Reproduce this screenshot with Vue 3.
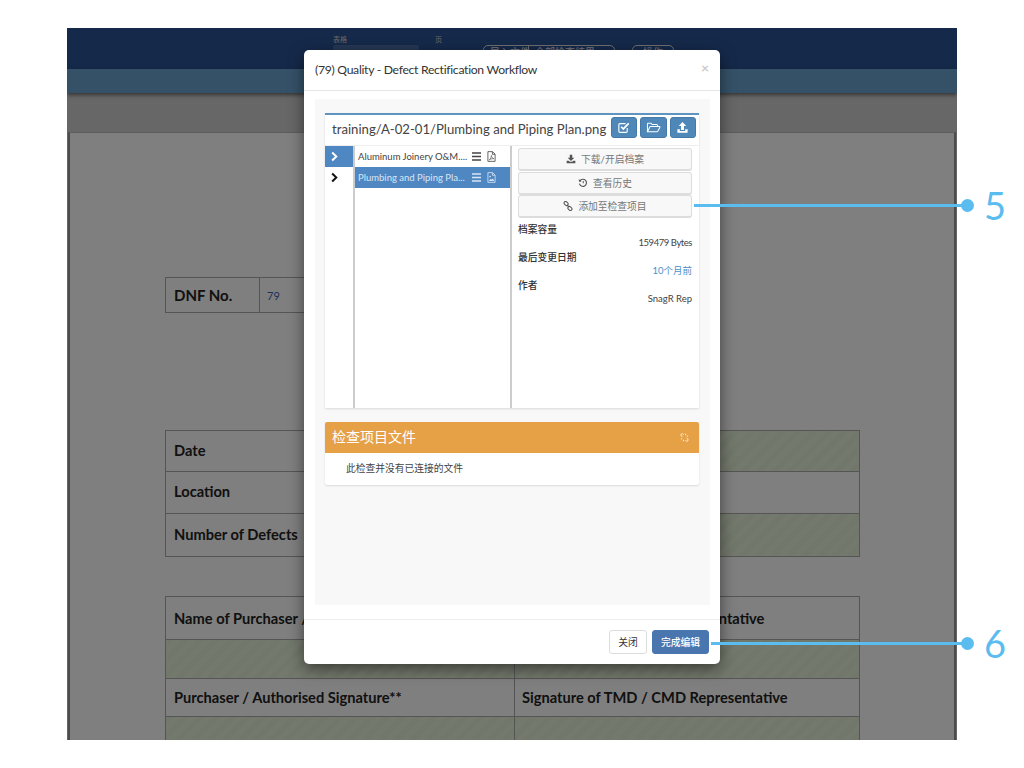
<script setup>
const files = [
  { name: 'Aluminum Joinery O&M....', active: false, kind: 'pdf' },
  { name: 'Plumbing and Piping Pla...', active: true, kind: 'img' },
]
const actions = [
  { label: '下载/开启档案', icon: 'download' },
  { label: '查看历史', icon: 'history' },
  { label: '添加至检查项目', icon: 'link' },
]
</script>

<template>
  <div class="root">
    <div class="screen">
      <div class="topbar">
        <div class="field field-a"><span>表格</span><i class="fake-input"></i></div>
        <div class="field field-b"><span>页</span></div>
        <div class="outline o1">
          <span class="seg seg-a">导入文件</span>
          <span class="seg">全部检查结果</span>
        </div>
        <div class="outline o2"><span class="seg">操作</span></div>
      </div>
      <div class="subbar"></div>
      <div class="band"></div>
      <div class="paper">
        <div class="tbl tbl-dnf">
          <div class="cell head dnf-l">DNF No.</div>
          <div class="cell dnf-v">79</div>
        </div>
        <div class="tbl tbl-info">
          <div class="row r41"><div class="cell head">Date</div><div class="cell hatch"></div></div>
          <div class="row r42"><div class="cell head">Location</div><div class="cell"></div></div>
          <div class="row r43"><div class="cell head">Number of Defects</div><div class="cell hatch"></div></div>
        </div>
        <div class="tbl tbl-sign">
          <div class="row r43"><div class="cell head">Name of Purchaser / Authorised</div><div class="cell head">Name of TMD / CMD Representative</div></div>
          <div class="row r40"><div class="cell hatch"></div><div class="cell hatch"></div></div>
          <div class="row r39"><div class="cell head">Purchaser / Authorised Signature**</div><div class="cell head">Signature of TMD / CMD Representative</div></div>
          <div class="row r39"><div class="cell hatch"></div><div class="cell hatch"></div></div>
        </div>
      </div>
      <div class="dim"></div>
    </div>

    <div class="modal">
      <div class="modal-head">
        <span class="title">(79) Quality - Defect Rectification Workflow</span>
        <span class="close">×</span>
      </div>
      <div class="well">
        <div class="panel">
          <div class="path-row">
            <span class="path">training/A-02-01/Plumbing and Piping Plan.png</span>
            <div class="tool-group">
              <button class="tool">
                <svg viewBox="0 0 14 14" class="ti"><path d="M11 7.500V11a1.200 1.200 0 0 1-1.200 1.200H3.200A1.200 1.200 0 0 1 2 11V4a1.200 1.200 0 0 1 1.200-1.200h6" fill="none" stroke="currentColor" stroke-width="1.200"/><path d="M4.500 6.200 6.800 8.600 12.600 2.600" fill="none" stroke="currentColor" stroke-width="1.900"/></svg>
              </button>
              <button class="tool">
                <svg viewBox="0 0 16 14" class="ti ti-w"><path d="M1.500 11.500V3.200a.8.8 0 0 1 .8-.8h3l1.200 1.400h5a.8.8 0 0 1 .8.8V6M1.500 11.500 4 6.400a.8.8 0 0 1 .7-.4h9.600a.6.6 0 0 1 .5.9l-2.200 4.200a.8.8 0 0 1-.7.4z" fill="none" stroke="currentColor" stroke-width="1.100"/></svg>
              </button>
              <button class="tool">
                <svg viewBox="0 0 14 14" class="ti"><path d="M7 1 11 5.400H8.600V9.600H5.400V5.400H3zM1.500 9h2.600v1.800h5.800V9h2.600v3.600H1.500z" fill="currentColor"/></svg>
              </button>
            </div>
          </div>
          <div class="browser">
            <div class="tree">
              <div class="tree-row on">
                <svg viewBox="0 0 10 12" class="chev"><path d="M2.400 1.600 7 6l-4.600 4.400" fill="none" stroke="currentColor" stroke-width="2.200"/></svg>
              </div>
              <div class="tree-row">
                <svg viewBox="0 0 10 12" class="chev"><path d="M2.400 1.600 7 6l-4.600 4.400" fill="none" stroke="currentColor" stroke-width="2.200"/></svg>
              </div>
            </div>
            <div class="list">
              <div v-for="f in files" :key="f.name" class="file" :class="{ on: f.active }">
                <span class="fname">{{ f.name }}</span>
                <svg viewBox="0 0 10 10" class="bars"><path d="M0 1.200h10M0 5h10M0 8.800h10" stroke="currentColor" stroke-width="1.700"/></svg>
                <svg v-if="f.kind === 'pdf'" viewBox="0 0 10 12" class="fi"><path d="M1 .6h5.200L9 3.400v8H1zM6 .8v2.800h2.800" fill="none" stroke="currentColor" stroke-width=".9"/><path d="M2.600 9.800C4 8.400 5 6.400 4.800 4.800 5.200 7 6 8 7.600 8.400 6 8.200 4 8.800 2.600 9.800z" fill="none" stroke="currentColor" stroke-width=".7"/></svg>
                <svg v-else viewBox="0 0 10 12" class="fi"><path d="M1 .6h5.200L9 3.400v8H1zM6 .8v2.800h2.800" fill="none" stroke="currentColor" stroke-width=".9"/><circle cx="3.400" cy="5" r=".9" fill="currentColor"/><path d="M2 9.800 4.200 7.400 5.400 8.600 6.600 7l1.400 2.800z" fill="currentColor"/></svg>
              </div>
            </div>
            <div class="detail">
              <div class="actions">
                <button v-for="a in actions" :key="a.label" class="act">
                  <svg v-if="a.icon === 'download'" viewBox="0 0 12 12" class="ai"><path d="M4.500 1h3v3.600H10L6 8.400 2 4.600h2.500zM.8 8h2.400l1.400 1.400h2.800L8.800 8h2.400v3H.8z" fill="currentColor"/></svg>
                  <svg v-else-if="a.icon === 'history'" viewBox="0 0 12 12" class="ai"><path d="M2.300 3.400A4.300 4.300 0 1 1 1.700 6.800" fill="none" stroke="currentColor" stroke-width="1.300"/><path d="M.9 1.300 1.200 4.500 4.300 4.200zM5.700 3.600h1.200v2.800H5.700z" fill="currentColor"/></svg>
                  <svg v-else viewBox="0 0 12 12" class="ai"><g fill="none" stroke="currentColor" stroke-width="1.200"><rect x="1" y="1.200" width="5.400" height="3.600" rx="1.800" transform="rotate(45 3.700 3)"/><rect x="5.600" y="7.200" width="5.400" height="3.600" rx="1.800" transform="rotate(45 8.300 9)"/></g><path d="M4.800 4.800 7.200 7.200" stroke="currentColor" stroke-width="1.300"/></svg>
                  <span>{{ a.label }}</span>
                </button>
              </div>
              <dl class="meta">
                <dt>档案容量</dt><dd class="bytes">159479 Bytes</dd>
                <dt>最后变更日期</dt><dd class="link">10个月前</dd>
                <dt>作者</dt><dd>SnagR Rep</dd>
              </dl>
            </div>
          </div>
        </div>

        <div class="panel2">
          <div class="panel2-head">
            <span>检查项目文件</span>
            <svg viewBox="0 0 12 12" class="unlink"><path d="M5 2.200 4.200 1.500a1.700 1.700 0 0 0-2.500 2.400l1.500 1.500M7 9.800l.8.700a1.700 1.700 0 0 0 2.500-2.400L8.800 6.600M7.500 1v2M10.800 4.200H9M1.200 7.800H3M4.500 11V9" fill="none" stroke="currentColor" stroke-width="1.100"/></svg>
          </div>
          <div class="panel2-body">此检查并没有已连接的文件</div>
        </div>
      </div>
      <div class="modal-foot">
        <button class="btn btn-plain">关闭</button>
        <button class="btn btn-main">完成编辑</button>
      </div>
    </div>

    <div class="callout c5"><i class="line"></i><i class="dot"></i><span class="num">5</span></div>
    <div class="callout c6"><i class="line"></i><i class="dot"></i><span class="num">6</span></div>
  </div>
</template>

<style>
html, body { margin: 0; background: #fff; }
</style>

<style scoped>
.root {
  position: relative;
  width: 1024px;
  height: 768px;
  overflow: hidden;
  background: #fff;
  font-family: Lato, "Noto Sans CJK SC", sans-serif;
}
.screen {
  position: absolute;
  left: 67px;
  top: 28px;
  width: 890px;
  height: 712px;
  overflow: hidden;
  background: #ccc;
}
.dim {
  position: absolute;
  inset: 0;
  background: rgba(0, 0, 0, .5);
}
.topbar {
  position: relative;
  height: 41px;
  background: #2a5394;
  color: #ccc;
  font-size: 7px;
}
.field { position: absolute; top: 7px; }
.field span { display: block; line-height: 9px; }
.field-a { left: 266px; }
.field-b { left: 368px; }
.fake-input {
  display: block;
  width: 86px;
  height: 20px;
  margin-top: 1px;
  background: #4a6fa8;
  border-radius: 2px;
}
.outline {
  position: absolute;
  top: 17px;
  height: 20px;
  display: flex;
  border: 1px solid #ddd;
  border-radius: 5px;
  color: #eee;
  font-size: 10px;
  line-height: 11px;
}
.o1 { left: 416px; width: 130px; }
.o2 { left: 565px; width: 40px; justify-content: center; }
.seg { padding: 1px 0 0 6px; white-space: nowrap; }
.o2 .seg { padding-left: 0; }
.seg-a { width: 38px; border-right: 1px solid #ddd; }
.subbar {
  height: 24px;
  background: #6ba2d0;
  box-shadow: 0 2px 4px rgba(0, 0, 0, .5);
  position: relative;
}
.band { height: 39px; background: #cfcfcf; }
.paper {
  box-sizing: border-box;
  height: 620px;
  margin: 0 1px 0 1px;
  padding: 144px 0 0 95px;
  background: #fff;
  border-left: 2px solid #999;
  border-right: 2px solid #999;
  border-top: 1px solid #bbb;
  font-family: Lato, sans-serif;
}
.tbl { color: #222; }
.cell {
  box-sizing: border-box;
  display: flex;
  align-items: center;
  padding-left: 8px;
  border: 1px solid #aaa;
  font-size: 14.650px;
  min-width: 0;
  white-space: nowrap;
  overflow: hidden;
}
.head { font-weight: 700; color: #222; }
.tbl-dnf { display: flex; height: 36px; width: 349px; }
.dnf-l { width: 95px; font-size: 15px; }
.dnf-v { flex: 1; color: #3b5fb5; font-size: 11px; padding-left: 5px; border-left: 0; }
.tbl-info { margin-top: 118px; width: 695px; }
.tbl-info .head { padding-bottom: 2px; }
.tbl-sign { margin-top: 40px; width: 695px; }
.row { display: grid; grid-template-columns: 350px 345px; margin-top: -1px; }
.r40 { height: 40px; }
.r41 { height: 42px; }
.r42 { height: 43px; }
.r43 { height: 44px; }
.r39 { height: 39px; }
.cell + .cell { border-left: 0; padding-left: 7px; }
.hatch {
  background: repeating-linear-gradient(135deg, #e3efd4 0 5.500px, #e9f2db 5.500px 11px);
}

.modal {
  position: absolute;
  left: 304px;
  top: 50px;
  width: 416px;
  height: 614px;
  display: flex;
  flex-direction: column;
  background: #fff;
  border-radius: 5px;
  box-shadow: 0 5px 15px rgba(0, 0, 0, .5);
  color: #333;
}
.modal-head {
  flex: none;
  box-sizing: border-box;
  height: 41px;
  display: flex;
  justify-content: space-between;
  align-items: center;
  padding: 0 11px 2px;
  border-bottom: 1px solid #e5e5e5;
  font-size: 12.200px;
  color: #333;
}
.title { letter-spacing: -.3px; }
.close { font-size: 14px; color: #ccc; font-weight: 700; margin: -4px 0 0; }
.well {
  flex: 1;
  margin: 8px 10px 14px 11px;
  padding: 14px 11px 0 10px;
  background: #f8f8f8;
}
.panel {
  height: 293px;
  display: flex;
  flex-direction: column;
  background: #fff;
  border-top: 2px solid #5f93c0;
  box-shadow: 0 1px 2px rgba(0, 0, 0, .12);
}
.path-row {
  flex: none;
  box-sizing: border-box;
  height: 31px;
  display: flex;
  align-items: flex-start;
  justify-content: space-between;
  padding: 2px 3px 0 7px;
  border-bottom: 1px solid #eee;
}
.path { font-size: 13.150px; line-height: 24px; color: #444; white-space: nowrap; }
.tool-group { display: flex; gap: 3px; }
.tool {
  width: 26.500px;
  height: 21px;
  padding: 0;
  display: flex;
  align-items: center;
  justify-content: center;
  background: #4f88b8;
  color: #fff;
  border: 1px solid #457aa8;
  border-radius: 3px;
}
.ti { width: 13px; height: 13px; }
.ti-w { width: 15px; }
.browser { flex: 1; display: flex; min-height: 0; }
.tree { width: 28px; flex: none; }
.tree-row {
  height: 21px;
  display: flex;
  align-items: center;
  padding-left: 5px;
  color: #111;
}
.tree-row.on { background: #4f87c3; color: #fff; }
.chev { width: 9px; height: 11px; }
.list {
  width: 155px;
  flex: none;
  border-left: 2px solid #ccc;
  border-right: 2px solid #ccc;
}
.file {
  box-sizing: border-box;
  height: 21px;
  display: flex;
  align-items: center;
  padding: 0 14px 0 3px;
  font-size: 9.500px;
  color: #444;
}
.file.on { background: #4f87c3; color: #d8e6f4; }
.fname { flex: 1; white-space: nowrap; overflow: hidden; }
.bars { width: 9px; height: 9px; margin-right: 6px; }
.fi { width: 9px; height: 11px; }
.detail { flex: 1; padding: 2px 7px 0 6px; min-width: 0; }
.actions { display: flex; flex-direction: column; gap: .5px; }
.act {
  height: 23px;
  padding: 0;
  display: flex;
  align-items: center;
  justify-content: center;
  gap: 5px;
  background: #f8f8f8;
  border: 1px solid #ddd;
  border-bottom-width: 2px;
  border-radius: 3px;
  color: #777;
  font: 9.750px Lato, "Noto Sans CJK SC", sans-serif;
}
.ai { width: 10px; height: 10px; color: #555; }
.meta { margin: 4px 0 0; font-size: 9.750px; line-height: 14px; color: #444; }
.meta dt { font-weight: 500; color: #333; }
.meta dd { margin: 0; text-align: right; font-size: 9.500px; }
.meta dd.link { color: #4a90c8; }
.meta dd.bytes { letter-spacing: -.45px; }
.panel2 {
  margin-top: 14px;
  background: #fff;
  border-radius: 2px;
  box-shadow: 0 1px 2px rgba(0, 0, 0, .12);
}
.panel2-head {
  box-sizing: border-box;
  height: 31px;
  display: flex;
  align-items: center;
  justify-content: space-between;
  padding: 0 10px 3px 7px;
  background: #e6a045;
  color: #fff;
  font-size: 14px;
  border-radius: 2px 2px 0 0;
}
.unlink { width: 9px; height: 9px; margin-top: 3px; }
.panel2-body {
  box-sizing: border-box;
  height: 32px;
  display: flex;
  align-items: center;
  padding: 0 0 2px 21px;
  font-size: 9.750px;
  color: #444;
}
.modal-foot {
  flex: none;
  box-sizing: border-box;
  height: 45px;
  display: flex;
  justify-content: flex-end;
  align-items: center;
  gap: 5px;
  padding: 0 11px 0 0;
  border-top: 1px solid #eee;
}
.btn {
  height: 24px;
  padding: 0;
  border-radius: 3px;
  font: 9.750px Lato, "Noto Sans CJK SC", sans-serif;
}
.btn-plain { width: 38px; background: #fff; border: 1px solid #ddd; color: #333; }
.btn-main { width: 57px; background: #4a76b0; border: 1px solid #4a76b0; color: #fff; font-weight: 500; }

.callout { position: absolute; height: 0; color: #5bbcf0; }
.line {
  position: absolute;
  left: 0;
  right: 0;
  top: -1px;
  height: 3px;
  background: #5bbcf0;
}
.dot {
  position: absolute;
  right: -5px;
  top: -6px;
  width: 13px;
  height: 13px;
  border-radius: 50%;
  background: #5bbcf0;
}
.num {
  position: absolute;
  left: calc(100% + 15px);
  top: -21px;
  font: 400 38px/42px Lato, sans-serif;
}
.c5 { left: 694px; width: 275px; top: 205px; }
.c6 { left: 711px; width: 258px; top: 643px; }
</style>
